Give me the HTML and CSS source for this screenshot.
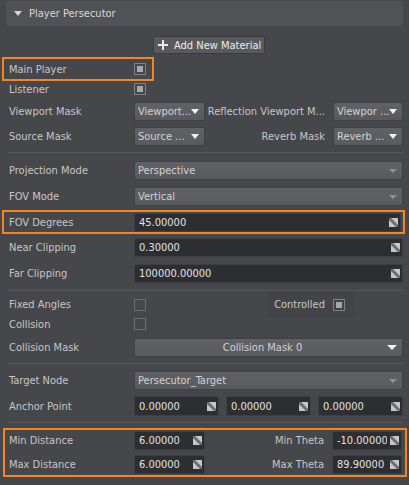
FILE: index.html
```html
<!DOCTYPE html>
<html>
<head>
<meta charset="utf-8">
<link rel="stylesheet" href="styles.css">
</head>
<body>
<div class="panel">
  <div class="header"><span class="caret"></span><span class="title">Player Persecutor</span></div>
  <div class="btn-row"><div class="btn"><span class="plus"></span><span>Add New Material</span></div></div>

  <div class="hl hl-main">
    <div class="row h20"><span class="lbl">Main Player</span><span class="cb on"><i></i></span></div>
  </div>
  <div class="row h16"><span class="lbl">Listener</span><span class="cb on"><i></i></span></div>

  <div class="row h19 mt5">
    <span class="lbl">Viewport Mask</span>
    <div class="dd small"><span class="dd-text">Viewport...</span><span class="arr white"></span></div>
    <span class="rlbl">Reflection Viewport M...</span>
    <div class="dd small r"><span class="dd-text">Viewpor ...</span><span class="arr white"></span></div>
  </div>
  <div class="row h19 mt6">
    <span class="lbl">Source Mask</span>
    <div class="dd small"><span class="dd-text">Source ...</span><span class="arr white"></span></div>
    <span class="rlbl">Reverb Mask</span>
    <div class="dd small r"><span class="dd-text">Reverb ...</span><span class="arr white"></span></div>
  </div>

  <div class="sep s1"></div>

  <div class="row h19 mt8">
    <span class="lbl">Projection Mode</span>
    <div class="dd wide"><span class="dd-text">Perspective</span><span class="arr gray"></span></div>
  </div>
  <div class="row h19 mt7">
    <span class="lbl">FOV Mode</span>
    <div class="dd wide"><span class="dd-text">Vertical</span><span class="arr gray"></span></div>
  </div>

  <div class="hl hl-fov">
    <div class="row h19">
      <span class="lbl">FOV Degrees</span>
      <div class="inp"><span class="val">45.00000</span><span class="drag"><svg width="9" height="9" viewBox="0 0 9 9"><rect width="9" height="9" fill="#6a6b6e"/><polygon points="2,0 9,0 9,7" fill="#c6c6c6"/><polygon points="0,2 0,9 7,9" fill="#c6c6c6"/></svg></span></div>
    </div>
  </div>

  <div class="row h19 mt4">
    <span class="lbl">Near Clipping</span>
    <div class="inp"><span class="val">0.30000</span><span class="drag"><svg width="9" height="9" viewBox="0 0 9 9"><rect width="9" height="9" fill="#6a6b6e"/><polygon points="2,0 9,0 9,7" fill="#c6c6c6"/><polygon points="0,2 0,9 7,9" fill="#c6c6c6"/></svg></span></div>
  </div>
  <div class="row h19 mt7">
    <span class="lbl">Far Clipping</span>
    <div class="inp"><span class="val">100000.00000</span><span class="drag"><svg width="9" height="9" viewBox="0 0 9 9"><rect width="9" height="9" fill="#6a6b6e"/><polygon points="2,0 9,0 9,7" fill="#c6c6c6"/><polygon points="0,2 0,9 7,9" fill="#c6c6c6"/></svg></span></div>
  </div>

  <div class="sep s2"></div>

  <div class="row h27">
    <span class="lbl">Fixed Angles</span><span class="cb"></span>
    <div class="ctrl-group"><span class="ctrl-lbl">Controlled</span><span class="cb on"><i></i></span></div>
  </div>
  <div class="row h12">
    <span class="lbl">Collision</span><span class="cb"></span>
  </div>
  <div class="row h19 mt8">
    <span class="lbl">Collision Mask</span>
    <div class="dd wide center"><span class="dd-text">Collision Mask 0</span><span class="arr white big"></span></div>
  </div>

  <div class="sep s3"></div>

  <div class="row h19 mt7">
    <span class="lbl">Target Node</span>
    <div class="dd wide"><span class="dd-text">Persecutor_Target</span><span class="arr gray"></span></div>
  </div>
  <div class="row h20 mt6 anchor">
    <span class="lbl">Anchor Point</span>
    <div class="inp"><span class="val">0.00000</span><span class="drag"><svg width="9" height="9" viewBox="0 0 9 9"><rect width="9" height="9" fill="#6a6b6e"/><polygon points="2,0 9,0 9,7" fill="#c6c6c6"/><polygon points="0,2 0,9 7,9" fill="#c6c6c6"/></svg></span></div>
    <div class="inp"><span class="val">0.00000</span><span class="drag"><svg width="9" height="9" viewBox="0 0 9 9"><rect width="9" height="9" fill="#6a6b6e"/><polygon points="2,0 9,0 9,7" fill="#c6c6c6"/><polygon points="0,2 0,9 7,9" fill="#c6c6c6"/></svg></span></div>
    <div class="inp"><span class="val">0.00000</span><span class="drag"><svg width="9" height="9" viewBox="0 0 9 9"><rect width="9" height="9" fill="#6a6b6e"/><polygon points="2,0 9,0 9,7" fill="#c6c6c6"/><polygon points="0,2 0,9 7,9" fill="#c6c6c6"/></svg></span></div>
  </div>

  <div class="sep s4"></div>

  <div class="hl hl-dist">
    <div class="row h19">
      <span class="lbl">Min Distance</span>
      <div class="inp small"><span class="val">6.00000</span><span class="drag"><svg width="9" height="9" viewBox="0 0 9 9"><rect width="9" height="9" fill="#6a6b6e"/><polygon points="2,0 9,0 9,7" fill="#c6c6c6"/><polygon points="0,2 0,9 7,9" fill="#c6c6c6"/></svg></span></div>
      <span class="rlbl">Min Theta</span>
      <div class="inp small r"><span class="val">-10.00000</span><span class="drag"><svg width="9" height="9" viewBox="0 0 9 9"><rect width="9" height="9" fill="#6a6b6e"/><polygon points="2,0 9,0 9,7" fill="#c6c6c6"/><polygon points="0,2 0,9 7,9" fill="#c6c6c6"/></svg></span></div>
    </div>
    <div class="row h19 mt5">
      <span class="lbl">Max Distance</span>
      <div class="inp small"><span class="val">6.00000</span><span class="drag"><svg width="9" height="9" viewBox="0 0 9 9"><rect width="9" height="9" fill="#6a6b6e"/><polygon points="2,0 9,0 9,7" fill="#c6c6c6"/><polygon points="0,2 0,9 7,9" fill="#c6c6c6"/></svg></span></div>
      <span class="rlbl">Max Theta</span>
      <div class="inp small r"><span class="val">89.90000</span><span class="drag"><svg width="9" height="9" viewBox="0 0 9 9"><rect width="9" height="9" fill="#6a6b6e"/><polygon points="2,0 9,0 9,7" fill="#c6c6c6"/><polygon points="0,2 0,9 7,9" fill="#c6c6c6"/></svg></span></div>
    </div>
  </div>
</div>
</body>
</html>
```

FILE: styles.css
```css
* { box-sizing: border-box; }
html, body {
  margin: 0;
  padding: 0;
  width: 409px;
  height: 485px;
  overflow: hidden;
  background: #46474a;
}
body {
  font-family: "DejaVu Sans Condensed", "DejaVu Sans", sans-serif;
  font-stretch: condensed;
  font-size: 11px;
  color: #c6c6c6;
}
.panel {
  padding: 1px 6px 0 9px;
}
.header {
  margin-left: -3px;
  height: 25px;
  background: #515256;
  border-radius: 3px;
  display: flex;
  align-items: center;
  padding-left: 8px;
}
.caret {
  width: 0;
  height: 0;
  border-left: 4px solid transparent;
  border-right: 4px solid transparent;
  border-top: 5px solid #d6d6d6;
  margin-right: 7px;
}
.title {
  color: #d8d8d8;
  font-size: 11px;
}
.btn-row {
  height: 31px;
  padding-top: 10px;
  display: flex;
  padding-left: 144px;
}
.btn {
  height: 18px;
  background: #595a5e;
  border: 1px solid #3a3b3e;
  border-radius: 2px;
  display: flex;
  align-items: center;
  padding: 0 3px 0 4px;
  color: #ececec;
  white-space: nowrap;
}
.plus {
  width: 10px;
  height: 10px;
  margin-right: 6px;
  flex: none;
  background:
    linear-gradient(#e8e8e8, #e8e8e8) center / 10px 2px no-repeat,
    linear-gradient(#e8e8e8, #e8e8e8) center / 2px 10px no-repeat;
}
.row {
  display: flex;
  align-items: center;
}
.h12 { height: 12px; }
.h16 { height: 16px; }
.h19 { height: 19px; }
.h20 { height: 20px; }
.h27 { height: 27px; }
.mt4 { margin-top: 4px; }
.mt5 { margin-top: 5px; }
.mt6 { margin-top: 6px; }
.mt7 { margin-top: 7px; }
.mt8 { margin-top: 8px; }
.lbl {
  width: 125px;
  flex: none;
  white-space: nowrap;
}
.rlbl {
  margin-left: auto;
  margin-right: 8px;
  white-space: nowrap;
}
.hl {
  border: 2px solid #f5861f;
}
.hl-main {
  margin-left: -7px;
  width: 152px;
  height: 24px;
  padding-left: 5px;
}
.hl-fov {
  margin-top: 4px;
  margin-left: -7px;
  margin-right: -2px;
  padding: 1px 2px 0 5px;
}
.hl-dist {
  margin-top: 5px;
  margin-left: -6px;
  margin-right: -4px;
  padding: 1px 3px 1px 4px;
}
.cb {
  width: 12px;
  height: 12px;
  border: 1px solid #6e6f72;
  flex: none;
  display: flex;
  align-items: center;
  justify-content: center;
}
.cb.on { border-color: #808184; }
.cb i {
  display: block;
  width: 6px;
  height: 6px;
  background: #a8a8a8;
}
.dd {
  height: 19px;
  background: linear-gradient(#616266, #595a5e);
  border: 1px solid #3f4043;
  border-radius: 2px;
  display: flex;
  align-items: center;
  padding-left: 3px;
  padding-right: 5px;
  color: #d2d2d2;
}
.dd.small { width: 71px; flex: none; }
.dd.small.r { width: 70px; }
.dd.wide { flex: 1; }
.dd-text {
  flex: 1;
  white-space: nowrap;
  overflow: hidden;
}
.dd.center .dd-text { text-align: center; }
.arr {
  flex: none;
  width: 0;
  height: 0;
}
.arr.white {
  border-left: 4px solid transparent;
  border-right: 4px solid transparent;
  border-top: 5px solid #f2f2f2;
}
.arr.white.big {
  border-left-width: 5px;
  border-right-width: 5px;
  border-top-width: 5px;
}
.arr.gray {
  border-left: 4px solid transparent;
  border-right: 4px solid transparent;
  border-top: 4px solid #8e8f92;
}
.sep {
  height: 1px;
  background: #56575b;
  margin-left: -1px;
}
.s1 { margin-top: 6px; }
.s2 { margin-top: 7px; }
.s3 { margin-top: 6px; }
.s4 { margin-top: 6px; }
.inp {
  flex: 1;
  height: 19px;
  background: #2d2e31;
  border: 1px solid #3e3f43;
  border-radius: 2px;
  display: flex;
  align-items: center;
  padding-left: 4px;
  padding-right: 2px;
  color: #e2e2e2;
  min-width: 0;
}
.anchor .inp { height: 20px; }
.anchor .inp + .inp { margin-left: 7px; }
.inp.small { width: 71px; flex: none; }
.inp.small.r { width: 70px; }
.val {
  flex: 1;
  white-space: nowrap;
  overflow: hidden;
  min-width: 0;
}
.drag {
  flex: none;
  width: 9px;
  height: 9px;
  margin-left: 3px;
  display: flex;
}
.ctrl-group {
  margin-left: auto;
  margin-right: 48px;
  height: 27px;
  width: 88px;
  background: #434447;
  display: flex;
  align-items: center;
  justify-content: flex-end;
  padding-right: 10px;
}
.ctrl-lbl { margin-right: 8px; }
```
